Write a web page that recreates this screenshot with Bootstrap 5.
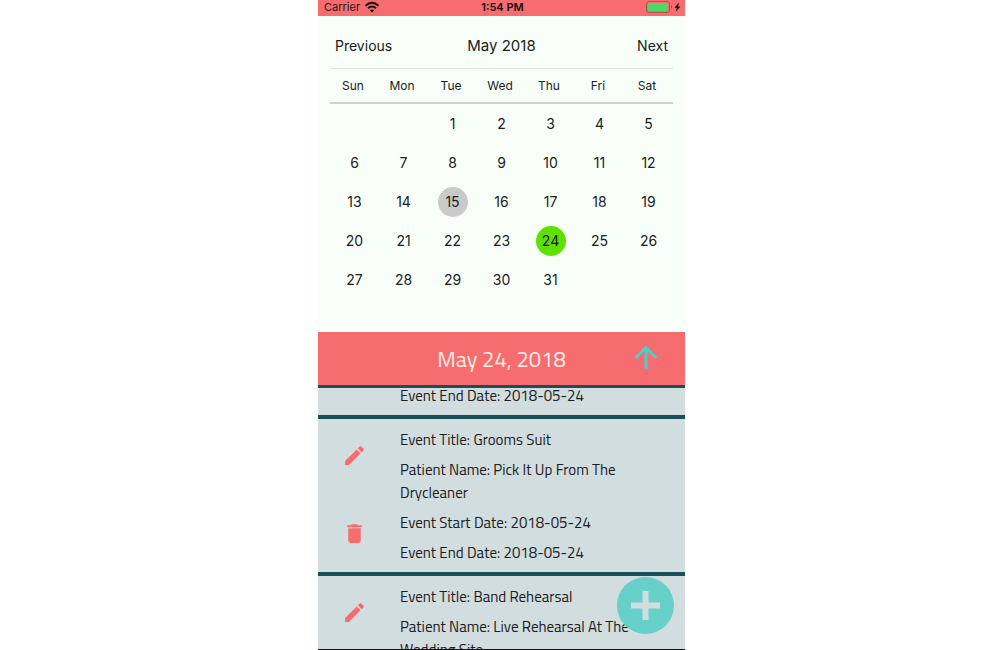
<!DOCTYPE html>
<html lang="en">
<head>
<meta charset="utf-8">
<meta name="viewport" content="width=device-width, initial-scale=1">
<title>Event calendar</title>
<link href="https://cdn.jsdelivr.net/npm/bootstrap@5.3.0/dist/css/bootstrap.min.css" rel="stylesheet">
<style>
  body { font-family: Inter, "Liberation Sans", sans-serif; color: #1b201d; background: #fff; padding-left: 3px; }
  .phone { max-width: 367px; border-bottom: 1px solid #111; background: #f8fff9; }
  .coral { background: #f76c6e; }
  .status-bar { height: 16px; font-size: 11px; line-height: 14px; padding: 0 4px 2px 6px; color: #2b1718; }
  .status-bar .col:nth-child(2) { color: #111; }
  .calendar { padding: 0 12px 34px; }
  .month-bar { height: 53px; padding: 8px 5px 0 5px; border-bottom: 1px solid #dfe6e0; }
  .month-bar button { font-size: 14px; line-height: 20px; color: inherit; }
  .month-bar h1 { font-size: 15px; line-height: 20px; }
  .days { table-layout: fixed; line-height: 20px; }
  .days th { height: 34px; font-size: 12px; font-weight: 400; padding: 0 3px 0 0; border-bottom: 2px solid #ccd3cd; }
  .days td { height: 39px; font-size: 14px; padding: 2px 0 0; }
  .day-mark { width: 30px; height: 30px; }
  .today { background: #cacaca; }
  .chosen { background: #5de200; color: #111; }
  .date-bar { height: 53px; padding-top: 2px; font-family: "Titillium Web", "Open Sans", sans-serif; color: #fdeee9; }
  .date-bar h2 { font-size: 22px; }
  .date-bar button { right: 27px; top: 13px; }
  .events { border-top: 3px solid #174f5a; background: #d2dddf; font-family: "Titillium Web", "Noto Sans", sans-serif; font-size: 15px; line-height: 23px; }
  .event-item { padding: 9px 0 8px; border-bottom: 4px solid #174f5a; }
  .event-item.scrolled { padding-top: 0; padding-bottom: 8px; margin-top: -4px; }
  .tools { width: 82px; padding: 15px 9px 18px 0; }
  .scrolled .tools { padding-top: 0; padding-bottom: 0; }
  .details { gap: 7px; padding-right: 52px; min-width: 0; }
  .fab { width: 57px; height: 57px; right: 11px; bottom: 15px; background: #66d0c9; }
</style>
</head>
<body class="vh-100 overflow-hidden">
<main class="phone position-relative d-flex flex-column h-100 mx-auto overflow-hidden">
  <header class="status-bar coral row g-0 flex-shrink-0">
    <div class="col d-flex align-items-center gap-1">Carrier
      <svg width="16" height="12" viewBox="0 0 16 12" fill="none" stroke="#111" stroke-width="2" aria-hidden="true"><path d="M1.5 4.8Q8-1.2 14.5 4.8M4 7.3q4-3.5 8 0"/><path d="M8 11.5 5.9 9.3q2.1-1.6 4.2 0z" fill="#111" stroke="none"/></svg>
    </div>
    <div class="col text-center fw-semibold">1:54 PM</div>
    <div class="col d-flex justify-content-end align-items-center">
      <svg width="36" height="12" viewBox="0 0 36 12" aria-hidden="true"><rect x="1.500" y=".5" width="23" height="11" rx="2.5" fill="none" stroke="#b05254"/><rect x="3" y="2" width="20" height="8" rx="1" fill="#4bd964"/><path d="M26 4q2 2 0 4z" fill="#944143"/><path d="m34 1.500-4.500 5.200h2.400l-1.200 4 4.800-5.200H33z" fill="#111"/></svg>
    </div>
  </header>

  <section class="calendar flex-shrink-0">
    <div class="month-bar d-flex align-items-center">
      <div class="col d-flex"><button type="button" class="btn p-0 border-0">Previous</button></div>
      <h1 class="fw-normal m-0">May 2018</h1>
      <div class="col d-flex justify-content-end"><button type="button" class="btn p-0 border-0">Next</button></div>
    </div>
    <table class="days w-100 text-center align-middle">
      <thead><tr><th>Sun</th><th>Mon</th><th>Tue</th><th>Wed</th><th>Thu</th><th>Fri</th><th>Sat</th></tr></thead>
      <tbody>
        <tr><td></td><td></td><td>1</td><td>2</td><td>3</td><td>4</td><td>5</td></tr>
        <tr><td>6</td><td>7</td><td>8</td><td>9</td><td>10</td><td>11</td><td>12</td></tr>
        <tr><td>13</td><td>14</td><td><span class="day-mark today rounded-circle d-flex align-items-center justify-content-center mx-auto">15</span></td><td>16</td><td>17</td><td>18</td><td>19</td></tr>
        <tr><td>20</td><td>21</td><td>22</td><td>23</td><td><span class="day-mark chosen rounded-circle d-flex align-items-center justify-content-center mx-auto">24</span></td><td>25</td><td>26</td></tr>
        <tr><td>27</td><td>28</td><td>29</td><td>30</td><td>31</td><td></td><td></td></tr>
      </tbody>
    </table>
  </section>

  <div class="date-bar coral position-relative d-flex align-items-center justify-content-center flex-shrink-0">
    <h2 class="m-0 fw-normal">May 24, 2018</h2>
    <button type="button" class="btn p-0 border-0 position-absolute d-flex" aria-label="Expand list">
      <svg width="24" height="26" viewBox="0 0 24 26" fill="none" stroke="#4fcdc7" stroke-width="3"><path d="M12 24V3M1.500 13 12 2.500 22.500 13"/></svg>
    </button>
  </div>

  <section class="events flex-fill overflow-hidden">
    <article class="event-item scrolled d-flex">
      <div class="tools flex-shrink-0"></div>
      <div class="details">Event End Date: 2018-05-24</div>
    </article>
    <article class="event-item d-flex">
      <div class="tools flex-shrink-0 d-flex flex-column align-items-center justify-content-between">
        <button type="button" class="btn p-0 border-0 d-flex" aria-label="Edit"><svg width="25" height="25" viewBox="0 0 24 24" fill="#f76c6e"><path d="M3 17.250V21h3.750L17.810 9.940l-3.750-3.750zM20.710 7.040a1 1 0 0 0 0-1.410l-2.340-2.340a1 1 0 0 0-1.410 0l-1.830 1.830 3.750 3.750z"/></svg></button>
        <button type="button" class="btn p-0 border-0 d-flex" aria-label="Delete"><svg width="25" height="25" viewBox="0 0 24 24" fill="#f76c6e"><path d="M6 19a2 2 0 0 0 2 2h8a2 2 0 0 0 2-2V7H6zM19 4h-3.500l-1-1h-5l-1 1H5v2h14z"/></svg></button>
      </div>
      <div class="details d-flex flex-column">
        <div>Event Title: Grooms Suit</div>
        <div>Patient Name: Pick It Up From The Drycleaner</div>
        <div>Event Start Date: 2018-05-24</div>
        <div>Event End Date: 2018-05-24</div>
      </div>
    </article>
    <article class="event-item d-flex">
      <div class="tools flex-shrink-0 d-flex flex-column align-items-center">
        <button type="button" class="btn p-0 border-0 d-flex" aria-label="Edit"><svg width="25" height="25" viewBox="0 0 24 24" fill="#f76c6e"><path d="M3 17.250V21h3.750L17.810 9.940l-3.750-3.750zM20.710 7.040a1 1 0 0 0 0-1.410l-2.340-2.340a1 1 0 0 0-1.410 0l-1.830 1.830 3.750 3.750z"/></svg></button>
      </div>
      <div class="details d-flex flex-column">
        <div>Event Title: Band Rehearsal</div>
        <div>Patient Name: Live Rehearsal At The Wedding Site</div>
      </div>
    </article>
  </section>

  <button type="button" class="fab btn border-0 rounded-circle position-absolute p-0 d-flex align-items-center justify-content-center" aria-label="Add event">
    <svg width="29" height="29" viewBox="0 0 29 29" fill="#d2dddf"><path d="M11.500 0h6v11.500H29v6H17.500V29h-6V17.500H0v-6h11.500z"/></svg>
  </button>
</main>
<script src="https://cdn.jsdelivr.net/npm/bootstrap@5.3.0/dist/js/bootstrap.bundle.min.js"></script>
</body>
</html>
